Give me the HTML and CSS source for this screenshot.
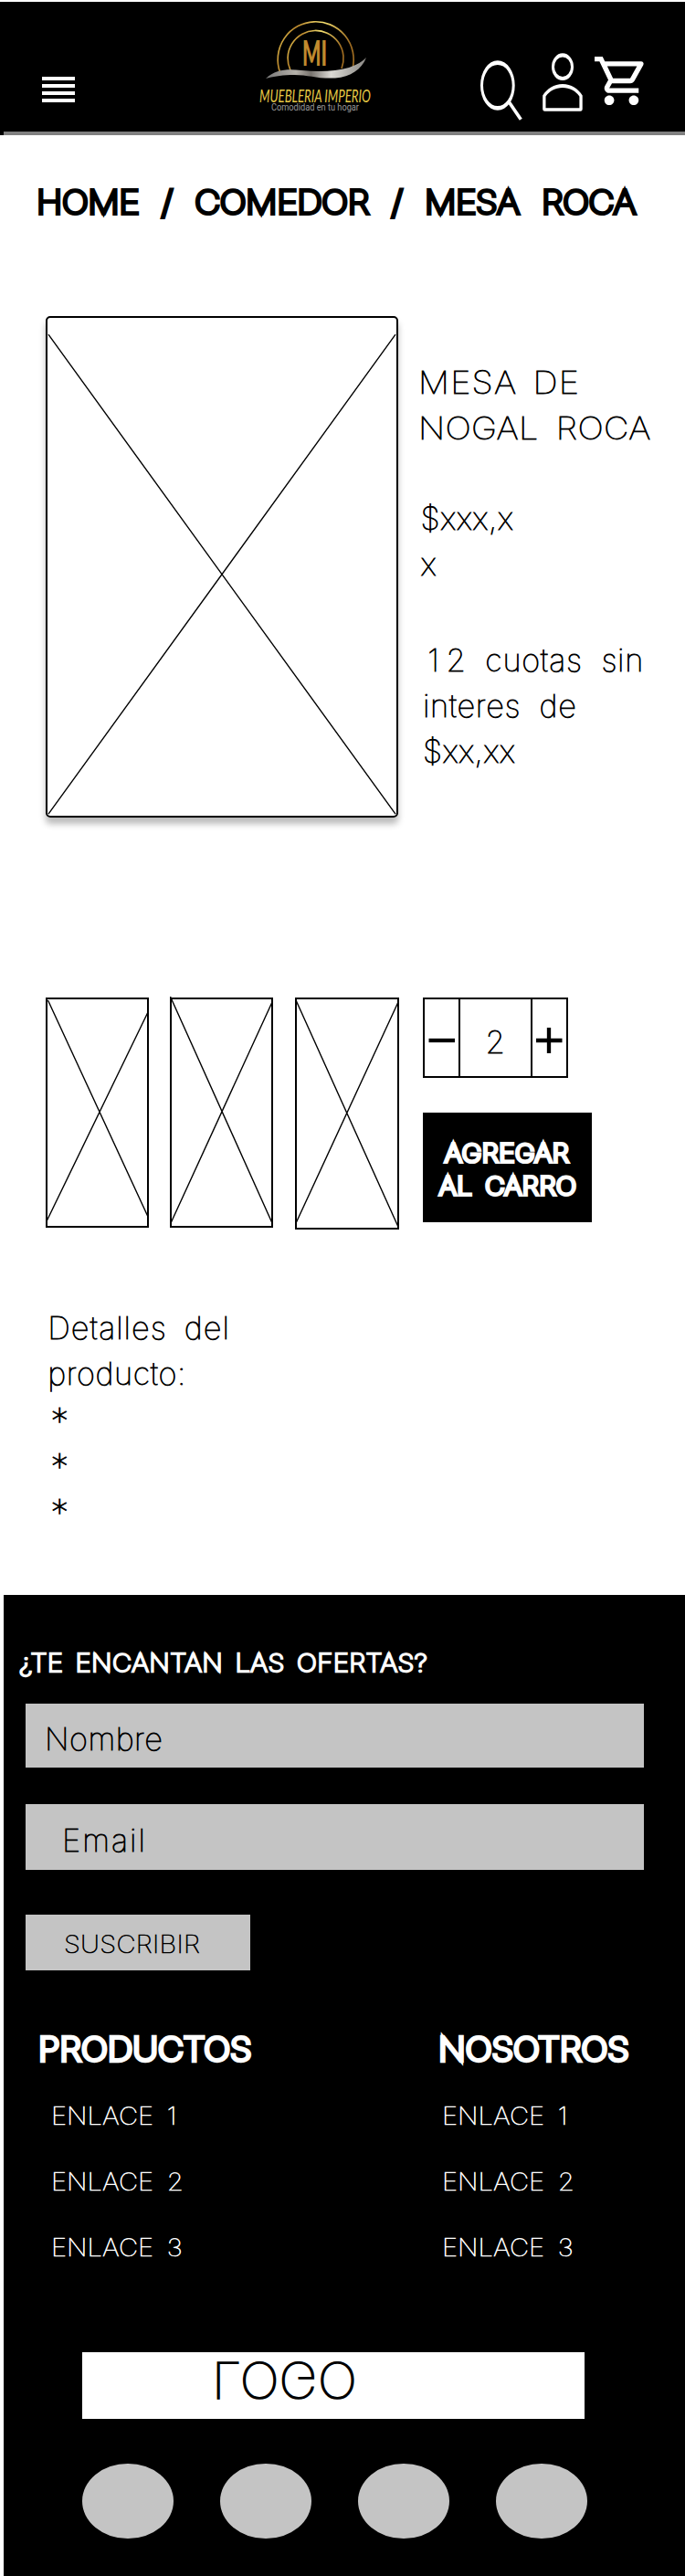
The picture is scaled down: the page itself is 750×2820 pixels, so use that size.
FILE: index.html
```html
<!DOCTYPE html>
<html lang="es">
<head>
<meta charset="utf-8">
<title>Mueblería Imperio - Mesa Roca</title>
<link rel="stylesheet" href="styles.css">
</head>
<body>
<header class="topbar">
  <svg class="menu" viewBox="0 0 36 28"><path d="M0 0h36v4H0zM0 8h36v4H0zM0 16h36v4H0zM0 24h36v4H0z" fill="#fff"/></svg>
  <svg class="brand" viewBox="280 16 130 112">
    <defs>
      <linearGradient id="gold" x1="0" y1="0" x2="1" y2="0.3"><stop offset="0" stop-color="#f0d860"/><stop offset=".25" stop-color="#b8862c"/><stop offset=".55" stop-color="#f5e070"/><stop offset="1" stop-color="#9c6a20"/></linearGradient>
      <linearGradient id="silver" x1="0" y1="0" x2="1" y2="0"><stop offset="0" stop-color="#777"/><stop offset=".3" stop-color="#b5b1aa"/><stop offset=".45" stop-color="#77736e"/><stop offset=".65" stop-color="#dcdad5"/><stop offset="1" stop-color="#8a8884"/></linearGradient>
    </defs>
    <path d="M306.500 79A41.500 41.500 0 1 1 386 75" fill="none" stroke="url(#gold)" stroke-width="1.700"/>
    <path d="M318 77A30.500 30.500 0 1 1 374 75" fill="none" stroke="url(#gold)" stroke-width="1.700"/>
    <text class="brand-mark" x="331" y="71.500" textLength="27" lengthAdjust="spacingAndGlyphs">MI</text>
    <path d="M291 86C302 76 314 75.500 330 77C350 79 368 78 382 74C391 71 397 67 401 63C396 76 384 84 367 85.500C346 86.500 336 81 318 82C306 82.500 299 84 291 86Z" fill="url(#silver)"/>
    <text class="brand-name" x="284" y="112" textLength="122" lengthAdjust="spacingAndGlyphs">MUEBLERIA IMPERIO</text>
    <text class="brand-tag" x="297" y="121" textLength="96" lengthAdjust="spacingAndGlyphs">Comodidad en tu hogar</text>
  </svg>
  <div class="actions">
    <svg class="search" viewBox="526 66 46 66" fill="none" stroke="#fff"><path d="M563.700 93.500a18.850 27.350 0 1 1-37.700 0a18.850 27.350 0 1 1 37.700 0M560.700 93.500a15.850 22.600 0 1 0-31.700 0a15.850 22.600 0 1 0 31.700 0" fill="#fff" stroke="none" fill-rule="evenodd"/><path d="M556.500 110.500L570.300 130.800" stroke-width="3.600"/></svg>
    <svg class="user" viewBox="594 58 44 64"><path d="M628 73.200a12 14.900 0 1 1-24 0a12 14.900 0 1 1 24 0M625 73.200a9 10.800 0 1 0-18 0a9 10.800 0 1 0 18 0M594.200 104.500C599 97 606.500 92 616 92S633 97 637.700 104.500V119.500Q637.700 121.800 635.400 121.800H596.500Q594.200 121.800 594.200 119.500ZM597.500 105.500V118.300H634.400V105.500C630 99.500 624 96 616 96S602 99.500 597.500 105.500Z" fill="#fff" fill-rule="evenodd"/></svg>
    <svg class="cart" viewBox="1 2 21 20" preserveAspectRatio="none"><path fill="#fff" d="M15.550 13c.75 0 1.410-.41 1.750-1.030l3.580-6.490A.996.996 0 0 0 20.010 4H5.210l-.94-2H1v2h2l3.600 7.590-1.350 2.440C4.520 15.370 5.480 17 7 17h12v-2H7l1.100-2h7.450zM6.160 6h12.150l-2.760 5H8.530L6.160 6zM7 18c-1.100 0-1.990.9-1.990 2S5.900 22 7 22s2-.9 2-2-.9-2-2-2zm10 0c-1.100 0-1.990.9-1.990 2s.89 2 1.990 2 2-.9 2-2-.9-2-2-2z"/></svg>
  </div>
</header>

<main>
  <nav class="crumbs"><span class="wide">HOME / COMEDOR / MESA ROCA</span></nav>
  <section class="product">
    <svg class="photo" viewBox="0 0 386 549"><path d="M1 17.500L385 548M385 17.500L1 548" stroke="#000" stroke-width="1.400"/></svg>
    <div class="info">
      <h1 class="title"><span class="wide title-a">MESA DE</span><br><span class="wide title-b">NOGAL ROCA</span></h1>
      <p class="price">$xxx,x<br>x</p>
      <p class="fees"><span class="fees-a"><span class="one">1</span>2 cuotas sin</span><br><span class="fees-b">interes de</span><br>$xx,xx</p>
    </div>
  </section>
  <section class="buy">
    <svg class="thumb" viewBox="0 0 113 252"><path d="M1 1H112V251H1Z" fill="none" stroke="#000" stroke-width="2"/><path d="M2.500 3L112.500 241M1 245L112.500 15" stroke="#000" stroke-width="1.400"/></svg>
    <svg class="thumb" viewBox="0 0 113 252"><path d="M1 1H112V251H1Z" fill="none" stroke="#000" stroke-width="2"/><path d="M.5 -1L112.500 248M.5 248L112 5" stroke="#000" stroke-width="1.400"/></svg>
    <svg class="thumb tall" viewBox="0 0 114 254"><path d="M1 1H113V253H1Z" fill="none" stroke="#000" stroke-width="2"/><path d="M1.500 4L113 251M1 247L113 5" stroke="#000" stroke-width="1.400"/></svg>
    <div class="order">
      <div class="qty">
        <svg viewBox="0 0 37 84" class="step"><path d="M4.500 45h28.500" stroke="#000" stroke-width="4.300"/></svg>
        <span class="count">2</span>
        <svg viewBox="0 0 37 84" class="step"><path d="M4 45h28.500M18 31v28" stroke="#000" stroke-width="4.300"/></svg>
      </div>
      <div class="add"><span class="wide add-a">AGREGAR</span><br><span class="wide add-b">AL CARRO</span></div>
    </div>
  </section>
  <section class="details">
    <h2 class="details-title">Detalles del<br><span class="details-b">producto:</span></h2>
    <p class="star">*</p><p class="star">*</p><p class="star">*</p>
  </section>
</main>

<footer class="footer">
  <h2 class="offers"><span class="wide">¿TE ENCANTAN LAS OFERTAS?</span></h2>
  <div class="field name">Nombre</div>
  <div class="field email">Email</div>
  <div class="subscribe"><span class="wide">SUSCRIBIR</span></div>
  <div class="columns">
    <div class="col"><h3><span class="wide">PRODUCTOS</span></h3><ul><li><span class="wide">ENLACE 1</span></li><li><span class="wide">ENLACE 2</span></li><li><span class="wide">ENLACE 3</span></li></ul></div>
    <div class="col second"><h3><span class="wide">NOSOTROS</span></h3><ul><li><span class="wide">ENLACE 1</span></li><li><span class="wide">ENLACE 2</span></li><li><span class="wide">ENLACE 3</span></li></ul></div>
  </div>
  <div class="foot-logo"><span class="flip">LOGO</span></div>
  <div class="social"><i></i><i></i><i></i><i></i></div>
</footer>
</body>
</html>
```
FILE: styles.css
```css
* { box-sizing: border-box; margin: 0; padding: 0; }
body {
  width: 750px;
  background: #fff;
  color: #000;
  font: 100 34.4px/50px Inter, sans-serif;
  -webkit-text-stroke: .85px currentColor;
}
h1, h2, h3 { font: inherit; }
svg { display: block; flex: none; overflow: visible; }
li { list-style: none; }

/* Extended capitals */
.wide { display: inline-block; vertical-align: top; transform: scaleX(1.1); transform-origin: 0 50%; }

.topbar {
  display: flex;
  align-items: flex-start;
  height: 146px;
  margin-top: 2px;
  background: linear-gradient(#808080, #808080) 4px 142px / 746px 4px no-repeat #000;
}
.menu { width: 36px; height: 28px; margin: 82px 0 0 46px; }
.brand { width: 130px; height: 112px; margin: 14px 0 0 198px; }
.brand text { -webkit-text-stroke: 0; }
.brand-mark { font: 900 38px Lato, sans-serif; fill: #c08a2e; }
.brand-name { font: italic 400 18.500px Lato, sans-serif; fill: #e6c844; }
.brand-name, .brand-name:lang(es) { -webkit-text-stroke: .4px #e6c844; }
.brand-tag { font: 400 10px Roboto, sans-serif; fill: #999; }
.actions { display: flex; align-items: flex-start; margin-left: 116px; padding-top: 56px; }
.search { width: 46px; height: 66px; margin-top: 8px; }
.user { width: 44px; height: 64px; margin-left: 22px; }
.cart { width: 56.300px; height: 53px; margin: 4px 0 0 13px; }

.crumbs {
  padding: 52px 0 0 40px;
  font-size: 35px;
  line-height: 42px;
  letter-spacing: -.350px;
  word-spacing: 12.700px;
  white-space: nowrap;
  -webkit-text-stroke-width: 4px;
}
.product { display: flex; align-items: flex-start; margin-top: 104px; padding-left: 50px; }
.photo {
  width: 386px;
  height: 549px;
  border: 2px solid #000;
  border-radius: 5px;
  box-shadow: 0 7px 7px rgba(0, 0, 0, .27);
}
.info { padding: 48px 0 0 22.300px; white-space: nowrap; }
.title-a { letter-spacing: 1.200px; word-spacing: 4.500px; }
.title-b { letter-spacing: .300px; word-spacing: 7.500px; }
.price { margin: 49px 0 0 2.300px; letter-spacing: .430px; }
.fees { margin: 55px 0 0 4.700px; letter-spacing: .350px; }
.fees-a { margin-left: 5.300px; letter-spacing: .700px; word-spacing: 10.500px; }
.one { letter-spacing: 7.500px; }
.fees-b { letter-spacing: .650px; word-spacing: 10.200px; }

.buy { display: flex; align-items: flex-start; margin-top: 197px; padding-left: 50px; }
.thumb { width: 113px; height: 252px; margin-right: 23px; }
.thumb + .thumb { margin-right: 24px; }
.thumb.tall { width: 114px; height: 254px; margin-right: 26px; }
.qty { display: flex; width: 158.500px; height: 88px; border: 2px solid #000; }
.step { width: 37px; height: 84px; }
.count { flex: 1; border: solid #000; border-width: 0 2px; line-height: 94px; text-align: center; }
.add {
  width: 185px;
  height: 120px;
  margin-top: 38px;
  padding-top: 26px;
  background: #000;
  color: #fff;
  font-size: 26.500px;
  line-height: 36px;
  white-space: nowrap;
  -webkit-text-stroke-width: 4px;
}
.add-a, .add-b { letter-spacing: .550px; }
.add-a { margin-left: 23.500px; }
.add-b { margin-left: 17.800px; word-spacing: 4.700px; }

.details { margin-top: 82.500px; padding-left: 52.300px; white-space: nowrap; }
.details-title { letter-spacing: 1px; word-spacing: 8.500px; }
.details-b { letter-spacing: .580px; }
.star { height: 50px; padding: 2px 0 0 3px; font-size: 40px; }

.footer { height: 1074px; margin: 67.500px 0 0 4px; background: #000; color: #fff; overflow: hidden; }
.offers {
  padding: 53.500px 0 0 16.800px;
  font-size: 26.500px;
  line-height: 40px;
  letter-spacing: .400px;
  word-spacing: 4.250px;
  white-space: nowrap;
  -webkit-text-stroke-width: 2.400px;
}
.field { width: 677px; height: 70px; margin: 25px 0 0 24px; background: #c4c4c4; color: #000; line-height: 78px; }
.name { padding-left: 21px; letter-spacing: .470px; }
.email { height: 72px; margin-top: 40px; padding-left: 40px; letter-spacing: 2.060px; line-height: 80px; }
.subscribe {
  width: 246px;
  height: 61.500px;
  margin: 49px 0 0 24px;
  padding-left: 41.500px;
  background: #c4c4c4;
  color: #000;
  font-size: 26.500px;
  line-height: 65px;
  letter-spacing: .250px;
  -webkit-text-stroke-width: .700px;
}
.columns { display: flex; padding: 63.500px 0 0 38px; }
.col { width: 438px; white-space: nowrap; }
.col h3 { font-size: 35px; line-height: 44px; letter-spacing: 0; -webkit-text-stroke-width: 4.400px; }
.col ul { padding: 15px 0 0 14px; }
.second { width: 260px; }
.second ul { padding-left: 4px; }
.col li { height: 72px; font-size: 26.500px; line-height: 72px; letter-spacing: 0; word-spacing: 6px; -webkit-text-stroke-width: .600px; }
.foot-logo {
  width: 549.500px;
  height: 72.500px;
  margin: 79.500px 0 0 86px;
  padding-left: 142.200px;
  background: #fff;
  color: #000;
  font-size: 54px;
  line-height: 61px;
  letter-spacing: .100px;
}
.flip { display: inline-block; transform: scale(1.06, -1); transform-origin: 0 50%; -webkit-text-stroke-width: 1.700px; }
.social { display: flex; gap: 51.500px; margin: 49px 0 0 86px; }
.social i { width: 99.500px; height: 82px; border-radius: 50%; background: #c4c4c4; }
```
